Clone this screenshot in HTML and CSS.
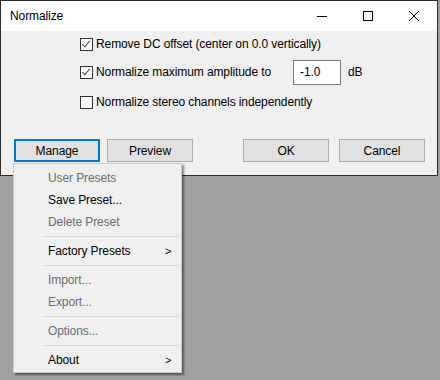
FILE: index.html
```html
<!DOCTYPE html>
<html>
<head>
  <title>Normalize</title>
  <meta charset="utf-8">
  <link rel="stylesheet" href="styles.css">
</head>
<body>
  <div class="window">
    <!-- Title bar -->
    <div class="titlebar">
      <div class="title">Normalize</div>
      <div class="caption-btn">
        <svg width="10" height="10" viewBox="0 0 10 10"><path d="M0 5.5H10" stroke="#000" stroke-width="1"/></svg>
      </div>
      <div class="caption-btn">
        <svg width="10" height="10" viewBox="0 0 10 10"><rect x="0.5" y="0.5" width="9" height="9" fill="none" stroke="#000" stroke-width="1"/></svg>
      </div>
      <div class="caption-btn">
        <svg width="10" height="10" viewBox="0 0 10 10"><path d="M0 0L10 10M10 0L0 10" stroke="#000" stroke-width="1"/></svg>
      </div>
    </div>

    <!-- Options -->
    <div class="options">
      <div class="row row-first">
        <span class="checkbox checked"></span>
        <span>Remove DC offset (center on 0.0 vertically)</span>
      </div>
      <div class="row">
        <span class="checkbox checked"></span>
        <span class="label-wide">Normalize maximum amplitude to</span>
        <span class="textbox">-1.0</span>
        <span class="unit">dB</span>
      </div>
      <div class="row">
        <span class="checkbox"></span>
        <span>Normalize stereo channels independently</span>
      </div>
    </div>

    <!-- Buttons -->
    <div class="buttons">
      <div class="btn focused">Manage</div>
      <div class="btn">Preview</div>
      <div class="spacer"></div>
      <div class="btn">OK</div>
      <div class="btn">Cancel</div>
    </div>
  </div>

  <!-- Manage popup menu -->
  <div class="menu">
    <div class="item disabled">User Presets</div>
    <div class="item">Save Preset...</div>
    <div class="item disabled">Delete Preset</div>
    <div class="sep"></div>
    <div class="item">Factory Presets<span class="arrow">&gt;</span></div>
    <div class="sep"></div>
    <div class="item disabled">Import...</div>
    <div class="item disabled">Export...</div>
    <div class="sep"></div>
    <div class="item disabled">Options...</div>
    <div class="sep"></div>
    <div class="item">About<span class="arrow">&gt;</span></div>
  </div>
</body>
</html>
```

FILE: styles.css
```css
body {
  margin: 0;
  width: 440px;
  height: 380px;
  overflow: hidden;
  background: #a0a0a0;
  font-family: 'Liberation Sans', Arial, sans-serif;
  font-size: 12px;
  letter-spacing: -0.1px;
  color: #000;
  position: relative;
}

.window {
  width: 436px;
  height: 174px;
  border: 1px solid #2b2b2b;
  background: #f0f0f0;
  display: flex;
  flex-direction: column;
}

.titlebar {
  height: 30px;
  background: #fff;
  display: flex;
  align-items: center;
}

.title {
  flex: 1;
  padding-left: 9px;
  padding-bottom: 1px;
}

.caption-btn {
  width: 46px;
  height: 30px;
  display: flex;
  align-items: center;
  justify-content: center;
}

.caption-btn svg {
  display: block;
}

.options {
  display: flex;
  flex-direction: column;
  padding-left: 79px;
}

.row {
  height: 30px;
  display: flex;
  align-items: center;
}

.row-first {
  height: 26px;
}

.checkbox {
  width: 11px;
  height: 11px;
  border: 1px solid #333;
  background: #fff;
  margin-right: 3px;
  position: relative;
}

.checkbox.checked::after {
  content: '';
  position: absolute;
  left: 3px;
  top: 0px;
  width: 3px;
  height: 7px;
  border-right: 1px solid #444;
  border-bottom: 1px solid #444;
  transform: rotate(40deg);
}

.label-wide {
  width: 197px;
}

.textbox {
  width: 40px;
  height: 23px;
  border: 1px solid #7a7a7a;
  background: #fff;
  padding-left: 6px;
  display: flex;
  align-items: center;
}

.unit {
  margin-left: 7px;
}

.buttons {
  display: flex;
  margin-top: 22px;
  padding: 0 12px 0 13px;
  gap: 7px;
}

.spacer {
  flex: 1;
}

.btn {
  width: 84px;
  height: 21px;
  border: 1px solid #adadad;
  background: #e1e1e1;
  display: flex;
  align-items: center;
  justify-content: center;
}

.btn.focused {
  width: 82px;
  height: 19px;
  border: 2px solid #0078d7;
}

.buttons .btn:last-child {
  margin-left: 3px;
}

.menu {
  position: absolute;
  left: 13px;
  top: 163px;
  width: 167px;
  padding: 3px 0 1px;
  background: #f0f0f0;
  border: 1px solid #cccccc;
  box-shadow: 2px 2px 2px rgba(0, 0, 0, 0.45);
}

.item {
  height: 22px;
  padding-left: 34px;
  display: flex;
  align-items: center;
  position: relative;
}

.item.disabled {
  color: #6d6d6d;
}

.arrow {
  position: absolute;
  left: 151px;
  font-size: 11px;
}

.sep {
  height: 1px;
  margin: 3px 2px 3px 30px;
  background: #d7d7d7;
}
```
